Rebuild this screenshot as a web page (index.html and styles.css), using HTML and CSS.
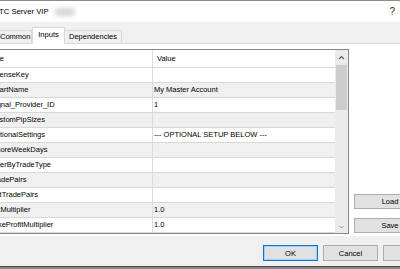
FILE: index.html
```html
<!DOCTYPE html>
<html>
<head>
    <title>TC Server VIP - Inputs</title>
    <link rel="stylesheet" href="styles.css">
</head>
<body>
    <div class="window">
        <div class="titlebar">
            <span class="title">TC Server VIP</span>
            <span class="smudge"></span>
            <span class="help">?</span>
        </div>

        <div class="tabs">
            <div class="tab tab-common">Common</div>
            <div class="tab tab-inputs active">Inputs</div>
            <div class="tab tab-deps">Dependencies</div>
        </div>

        <div class="page">
            <div class="grid">
                <div class="list">
                    <div class="row head"><div class="name">Name</div><div class="value">Value</div></div>
                    <div class="row"><div class="name">LicenseKey</div><div class="value"></div></div>
                    <div class="row alt"><div class="name">ChartName</div><div class="value">My Master Account</div></div>
                    <div class="row"><div class="name">Signal_Provider_ID</div><div class="value">1</div></div>
                    <div class="row alt"><div class="name">CustomPipSizes</div><div class="value"></div></div>
                    <div class="row"><div class="name">OptionalSettings</div><div class="value">--- OPTIONAL SETUP BELOW ---</div></div>
                    <div class="row alt"><div class="name">IgnoreWeekDays</div><div class="value"></div></div>
                    <div class="row"><div class="name">FilterByTradeType</div><div class="value"></div></div>
                    <div class="row alt"><div class="name">TradePairs</div><div class="value"></div></div>
                    <div class="row"><div class="name">NotTradePairs</div><div class="value"></div></div>
                    <div class="row alt"><div class="name">LotMultiplier</div><div class="value">1.0</div></div>
                    <div class="row"><div class="name">TakeProfitMultiplier</div><div class="value">1.0</div></div>
                </div>
                <div class="scrollbar">
                    <svg class="arrow" width="13" height="15" viewBox="0 0 13 15"><path d="M4 9 L6.5 6.5 L9 9" fill="none" stroke="#606060" stroke-width="1.2"/></svg>
                    <div class="thumb"></div>
                    <div class="track"></div>
                    <svg class="arrow" width="13" height="12" viewBox="0 0 13 12"><path d="M4.5 5 L6.5 7 L8.5 5" fill="none" stroke="#909090" stroke-width="1"/></svg>
                </div>
            </div>
            <div class="side">
                <button class="btn side-btn">Load</button>
                <button class="btn side-btn">Save</button>
            </div>
        </div>

        <div class="footer">
            <button class="btn foot-btn default">OK</button>
            <button class="btn foot-btn">Cancel</button>
            <button class="btn foot-btn">Reset</button>
        </div>
        <div class="edge"></div>
    </div>
</body>
</html>
```

FILE: styles.css
```css
body { margin: 0; font-family: "Liberation Sans", Arial, sans-serif; font-size: 7.5px; color: #000; }
.window { width: 400px; height: 269px; overflow: hidden; background: #f0f0f0; }

.titlebar {
    height: 21px;
    border-top: 1px solid #8c8c8c;
    background: #fff;
    display: flex;
    align-items: center;
}
.title { margin-left: -1px; font-size: 7.7px; }
.smudge {
    width: 20px;
    height: 8px;
    margin-left: 6px;
    background: #d6d6d6;
    border-radius: 4px;
    filter: blur(2px);
}
.help { margin-left: auto; margin-right: 5px; font-size: 10px; color: #333; }

.tabs {
    height: 21px;
    display: flex;
    align-items: flex-end;
}
.tab {
    height: 13px;
    line-height: 12px;
    flex-shrink: 0;
    box-sizing: border-box;
    border: 1px solid #d9d9d9;
    border-bottom: none;
    background: #f0f0f0;
}
.tab-common { width: 38px; margin-left: -6px; padding-left: 5px; }
.tab-inputs { width: 33px; text-align: center; }
.tab-deps { width: 57px; text-align: center; border-left: none; }
.tab.active {
    height: 17px;
    line-height: 13px;
    background: #fff;
    margin-bottom: -1px;
    position: relative;
}

.page {
    height: 193px;
    box-sizing: border-box;
    border-top: 1px solid #d9d9d9;
    background: #fff;
    display: flex;
    padding-top: 5px;
    padding-bottom: 3px;
}

.grid {
    margin-left: -20px;
    width: 369px;
    height: 185px;
    flex-shrink: 0;
    box-sizing: border-box;
    border: 1px solid #828790;
    display: flex;
    overflow: hidden;
}
.list { width: 354px; overflow: hidden; }
.row {
    display: grid;
    grid-template-columns: 172px 1fr;
    height: 15px;
    line-height: 14px;
    box-sizing: border-box;
    border-bottom: 1px solid #d8d8d8;
    white-space: nowrap;
}
.row.alt { background: #f0f0f0; }
.row.head { height: 18px; line-height: 17px; }
.name { border-right: 1px solid #dcdcdc; padding-left: 9px; }
.value { padding-left: 1px; overflow: hidden; }
.head .name { padding-left: 3px; }
.head .value { padding-left: 4px; }

.scrollbar {
    width: 13px;
    background: #ebebeb;
    display: flex;
    flex-direction: column;
}
.arrow { display: block; flex-shrink: 0; }
.thumb { height: 45px; margin: 0 1px; background: #cdcdcd; flex-shrink: 0; }
.track { flex: 1; }

.side {
    margin-left: 5px;
    display: flex;
    flex-direction: column;
    justify-content: flex-end;
    gap: 9px;
}
.btn {
    font-family: "Liberation Sans", Arial, sans-serif;
    font-size: 7.5px;
    color: #000;
    background: #e1e1e1;
    border: 1px solid #adadad;
    padding: 0;
    box-sizing: border-box;
    flex-shrink: 0;
}
.side-btn { width: 72px; height: 15px; }

.footer {
    height: 30px;
    box-sizing: border-box;
    padding: 9px 0 0 263px;
    display: flex;
    gap: 5px;
}
.foot-btn { width: 55px; height: 16px; }
.foot-btn.default { border-color: #0078d7; box-shadow: inset 0 0 0 1px #a8cdef; }

.edge { height: 3px; border-top: 1px solid #4a4a4a; background: #8a8a8a; }
```
